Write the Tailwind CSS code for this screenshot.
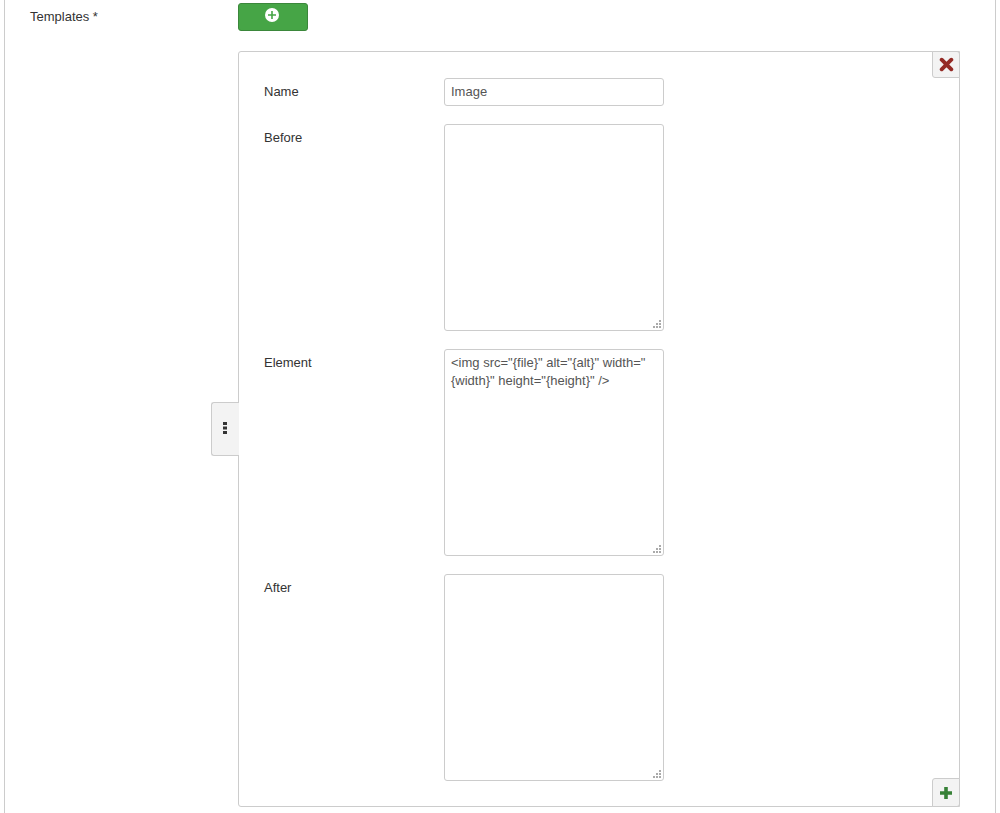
<!DOCTYPE html>
<html lang="en">
<head>
    <meta charset="UTF-8">
    <title>Templates</title>
    <script src="https://cdn.jsdelivr.net/npm/@tailwindcss/browser@4"></script>
</head>
<body class="bg-white overflow-hidden font-['Liberation_Sans',Arial,sans-serif] text-[13px] leading-[18px] text-[#333]">
    <div class="ml-[4px] w-[992px] h-[813px] border-x border-[#ccc] overflow-hidden">
        <div class="flex pt-[3px]">
            <!-- Label -->
            <label class="w-[233px] pl-[25px] pt-[5px] shrink-0">Templates *</label>

            <div class="w-[722px]">
                <button class="flex justify-center w-[70px] h-[28px] pt-[4px] bg-[#46a546] border border-[#3b873b] rounded-[3px]">
                    <svg class="w-[14px] h-[14px] ml-[-2px]" viewBox="0 0 14 14">
                        <circle cx="7" cy="7" r="7" fill="#fff"/>
                        <path d="M7 3v8M3 7h8" stroke="#46a546" stroke-width="1.6"/>
                    </svg>
                </button>

                <!-- Subform card -->
                <div class="relative mt-[20px] h-[756px] border border-[#ccc] rounded-tl-[3px] rounded-bl-[3px] pl-[25px] pt-[26px]">
                    <div class="flex h-[28px] mb-[18px]">
                        <div class="w-[180px] pt-[5px]">Name</div>
                        <input value="Image" class="w-[220px] h-[28px] px-[6px] pb-[2px] border border-[#ccc] rounded-[3px] text-[#555]">
                    </div>
                    <div class="flex h-[207px] mb-[18px]">
                        <div class="w-[180px] pt-[5px]">Before</div>
                        <div class="relative w-[220px] h-[207px]">
                            <textarea class="block w-full h-full px-[6px] py-[4px] border border-[#ccc] rounded-[3px] text-[#555] resize-none"></textarea>
                            <svg class="absolute right-[3px] bottom-[3px] w-[8px] h-[8px]" viewBox="0 0 8 8" fill="#aaa"><rect x="6" y="0" width="2" height="2"/><rect x="3" y="3" width="2" height="2"/><rect x="6" y="3" width="2" height="2"/><rect x="0" y="6" width="2" height="2"/><rect x="3" y="6" width="2" height="2"/><rect x="6" y="6" width="2" height="2"/></svg>
                        </div>
                    </div>
                    <div class="flex h-[207px] mb-[18px]">
                        <div class="w-[180px] pt-[5px]">Element</div>
                        <div class="relative w-[220px] h-[207px]">
                            <textarea class="block w-full h-full px-[6px] py-[4px] border border-[#ccc] rounded-[3px] text-[#555] resize-none">&lt;img src="{file}" alt="{alt}" width="{width}" height="{height}" /&gt;</textarea>
                            <svg class="absolute right-[3px] bottom-[3px] w-[8px] h-[8px]" viewBox="0 0 8 8" fill="#aaa"><rect x="6" y="0" width="2" height="2"/><rect x="3" y="3" width="2" height="2"/><rect x="6" y="3" width="2" height="2"/><rect x="0" y="6" width="2" height="2"/><rect x="3" y="6" width="2" height="2"/><rect x="6" y="6" width="2" height="2"/></svg>
                        </div>
                    </div>
                    <div class="flex h-[207px]">
                        <div class="w-[180px] pt-[5px]">After</div>
                        <div class="relative w-[220px] h-[207px]">
                            <textarea class="block w-full h-full px-[6px] py-[4px] border border-[#ccc] rounded-[3px] text-[#555] resize-none"></textarea>
                            <svg class="absolute right-[3px] bottom-[3px] w-[8px] h-[8px]" viewBox="0 0 8 8" fill="#aaa"><rect x="6" y="0" width="2" height="2"/><rect x="3" y="3" width="2" height="2"/><rect x="6" y="3" width="2" height="2"/><rect x="0" y="6" width="2" height="2"/><rect x="3" y="6" width="2" height="2"/><rect x="6" y="6" width="2" height="2"/></svg>
                        </div>
                    </div>

                    <!-- Delete -->
                    <button class="absolute top-[-1px] right-[-1px] flex items-center justify-center w-[28px] h-[27px] bg-[#f3f3f3] border border-[#ccc] rounded-tr-[3px] rounded-bl-[3px]">
                        <svg class="w-[15px] h-[15px]" viewBox="0 0 14 14"><path d="M2.5 2.5l9 9M11.5 2.5l-9 9" stroke="#942a25" stroke-width="3.6" stroke-linecap="round"/></svg>
                    </button>
                    <!-- Add -->
                    <button class="absolute bottom-[-1px] right-[-1px] flex items-center justify-center w-[28px] h-[29px] bg-[#f3f3f3] border border-[#ccc] rounded-tl-[3px] rounded-br-[3px]">
                        <svg class="w-[14px] h-[14px]" viewBox="0 0 14 14"><path d="M7 1v12M1 7h12" stroke="#378137" stroke-width="3.6"/></svg>
                    </button>
                    <!-- Drag handle -->
                    <div class="absolute left-[-28px] top-[350px] flex items-center justify-center w-[28px] h-[54px] pr-[2px] pb-[2px] bg-[#f3f3f3] border border-r-0 border-[#ccc] rounded-l-[3px]">
                        <svg class="w-[4px] h-[12px]" viewBox="0 0 4 12" fill="#333"><rect width="4" height="3"/><rect y="4.5" width="4" height="3"/><rect y="9" width="4" height="3"/></svg>
                    </div>
                </div>
            </div>
        </div>
    </div>
</body>
</html>
